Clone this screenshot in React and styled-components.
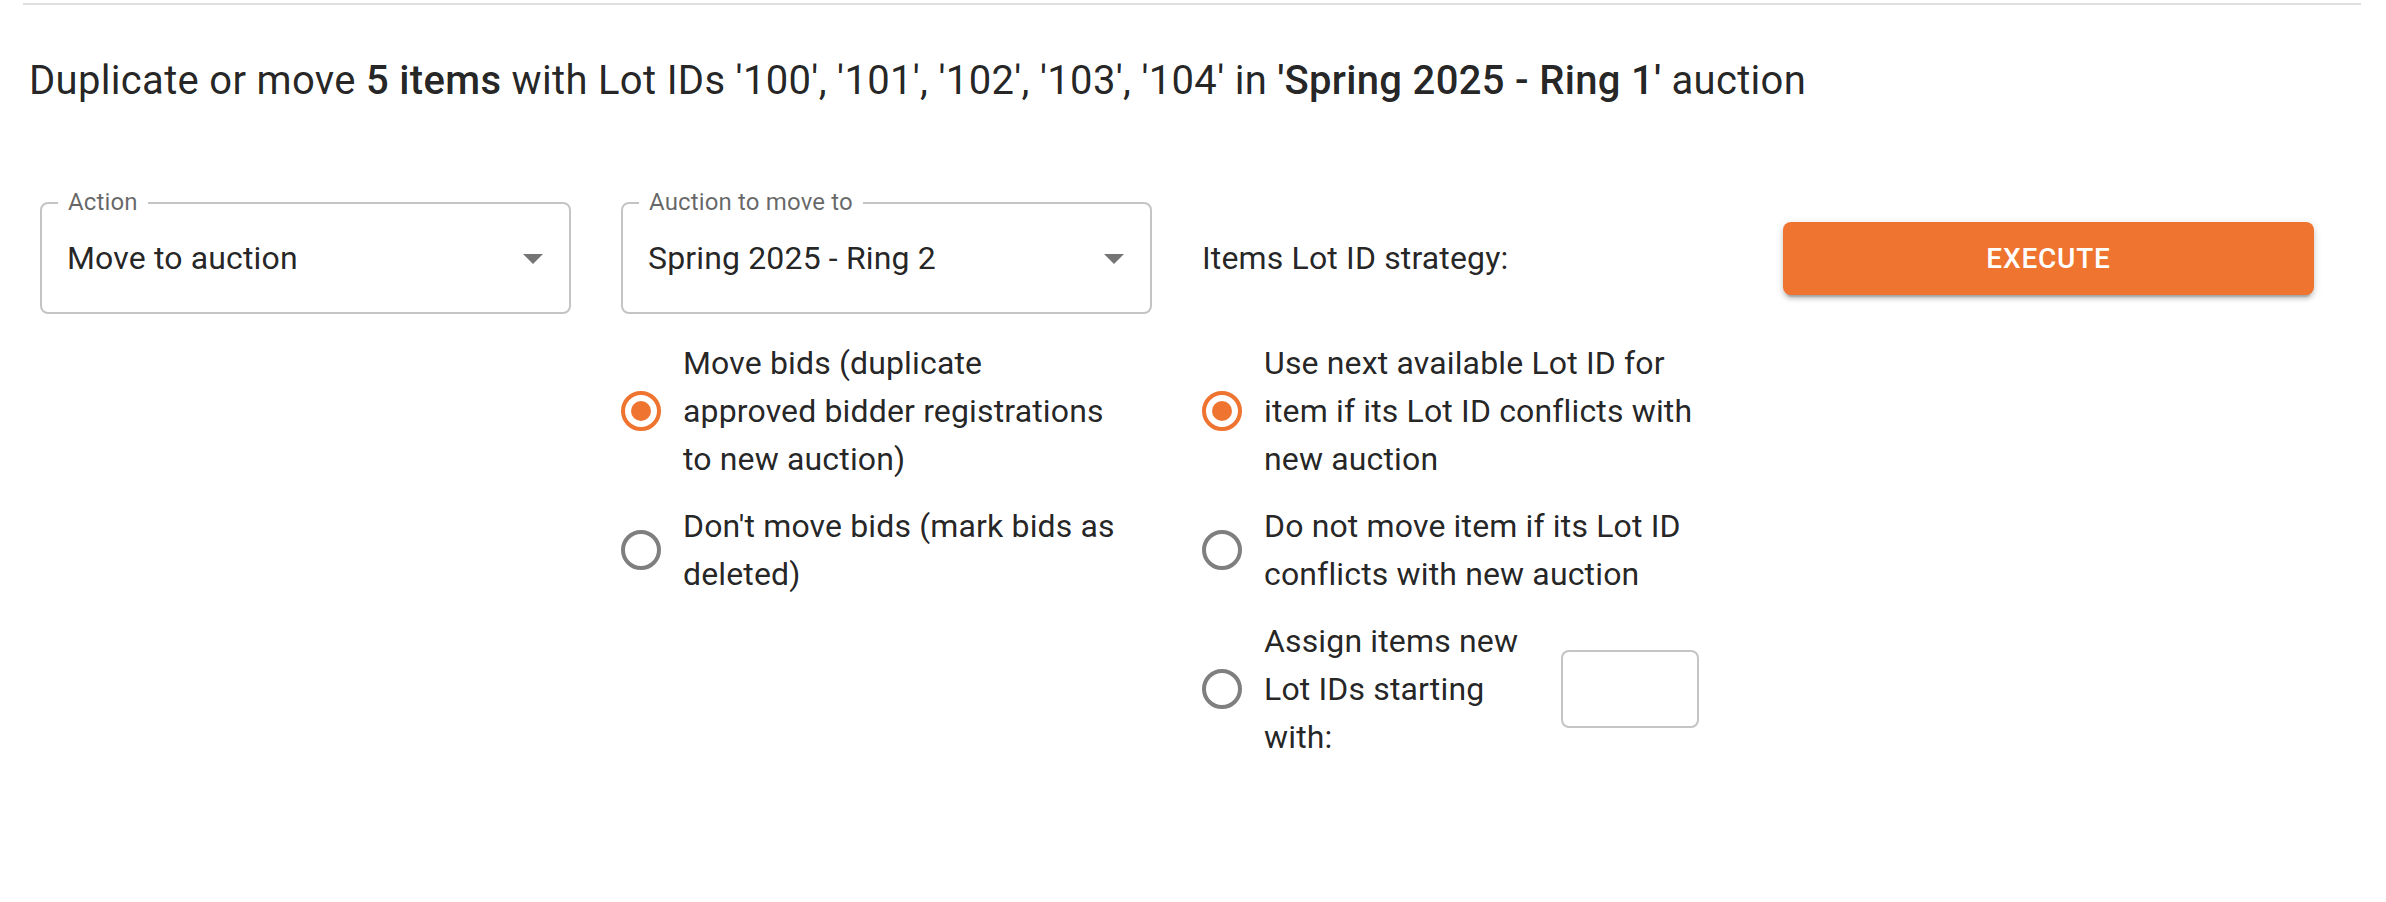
import React from 'react';
import styled, { createGlobalStyle } from 'styled-components';

const ORANGE = '#ef7430';

const GlobalStyle = createGlobalStyle`
  html, body {
    margin: 0;
    padding: 0;
    background: #fff;
  }
  body {
    font-family: Roboto, "Noto Sans", Arial, sans-serif;
    color: rgba(0, 0, 0, 0.87);
    letter-spacing: 0.00938em;
  }
`;

const Page = styled.div`
  padding: 3px 25px 0 23px;
`;

const Divider = styled.hr`
  margin: 0;
  border: none;
  height: 2px;
  background: #e0e0e0;
`;

const Body = styled.div`
  padding-left: 17px;
`;

const Heading = styled.h2`
  margin: 44px 0 0 -11px;
  font-size: 40px;
  line-height: 64px;
  font-weight: 400;
  letter-spacing: 0.32px;
  b {
    font-weight: 500;
  }
`;

const Form = styled.div`
  display: grid;
  grid-template-columns: repeat(4, 531px);
  column-gap: 50px;
  row-gap: 25px;
  margin-top: 89px;
`;

const SelectBox = styled.div`
  position: relative;
  box-sizing: border-box;
  height: 112px;
  border: 2px solid rgba(0, 0, 0, 0.23);
  border-radius: 8px;
  display: flex;
  align-items: center;
  padding: 0 12px 0 25px;
`;

const FloatLabel = styled.span`
  position: absolute;
  top: -16px;
  left: 16px;
  padding: 0 10px;
  background: #fff;
  font-size: 24px;
  line-height: 28px;
  color: rgba(0, 0, 0, 0.6);
`;

const SelectValue = styled.span`
  flex: 1;
  font-size: 32px;
  line-height: 46px;
`;

const Caret = styled.svg`
  width: 48px;
  height: 48px;
  fill: rgba(0, 0, 0, 0.54);
  flex-shrink: 0;
`;

const StrategyLabel = styled.div`
  display: flex;
  align-items: center;
  height: 112px;
  font-size: 32px;
  line-height: 48px;
`;

const ExecuteButton = styled.button`
  align-self: start;
  margin-top: 20px;
  height: 73px;
  border: none;
  border-radius: 8px;
  background: ${ORANGE};
  color: #fff;
  font-family: Roboto, Arial, sans-serif;
  font-size: 28px;
  font-weight: 500;
  letter-spacing: 0.8px;
  text-transform: uppercase;
  box-shadow: 0 6px 2px -4px rgba(0, 0, 0, 0.2), 0 4px 4px 0 rgba(0, 0, 0, 0.14),
    0 2px 10px 0 rgba(0, 0, 0, 0.12);
  cursor: pointer;
`;

const RadioGroup = styled.div`
  display: flex;
  flex-direction: column;
  gap: 19px;
`;

const Option = styled.label`
  display: flex;
  align-items: center;
  margin-left: -22px;
  cursor: pointer;
`;

const RadioBox = styled.span`
  display: flex;
  padding: 18px;
  flex-shrink: 0;
`;

const OptionText = styled.span`
  width: ${(p) => p.width || 440}px;
  font-size: 32px;
  line-height: 48px;
`;

const SmallInput = styled.input`
  box-sizing: border-box;
  width: 138px;
  height: 78px;
  margin-left: 17px;
  border: 2px solid rgba(0, 0, 0, 0.23);
  border-radius: 8px;
  font-size: 32px;
  padding: 0 16px;
  font-family: Roboto, Arial, sans-serif;
  outline: none;
`;

const Radio = ({ checked }) => (
  <RadioBox>
    <svg width="48" height="48" viewBox="0 0 24 24">
      <circle
        cx="12"
        cy="12"
        r="9"
        fill="none"
        strokeWidth="2"
        stroke={checked ? ORANGE : 'rgba(0,0,0,0.5)'}
      />
      {checked && <circle cx="12" cy="12" r="5" fill={ORANGE} />}
    </svg>
  </RadioBox>
);

const Select = ({ label, value }) => (
  <SelectBox>
    <FloatLabel>{label}</FloatLabel>
    <SelectValue>{value}</SelectValue>
    <Caret viewBox="0 0 24 24">
      <path d="M7 10l5 5 5-5z" />
    </Caret>
  </SelectBox>
);

export default function App() {
  return (
    <>
      <GlobalStyle />
      <Page>
        <Divider />
        <Body>
          <Heading>
            Duplicate or move <b>5 items</b> with Lot IDs '100', '101', '102', '103', '104' in{' '}
            <b>'Spring 2025 - Ring 1'</b> auction
          </Heading>
          <Form>
            <Select label="Action" value="Move to auction" />
            <Select label="Auction to move to" value="Spring 2025 - Ring 2" />
            <StrategyLabel>Items Lot ID strategy:</StrategyLabel>
            <ExecuteButton>Execute</ExecuteButton>

            <div />
            <RadioGroup>
              <Option>
                <Radio checked />
                <OptionText>Move bids (duplicate approved bidder registrations to new auction)</OptionText>
              </Option>
              <Option>
                <Radio />
                <OptionText>Don't move bids (mark bids as deleted)</OptionText>
              </Option>
            </RadioGroup>
            <RadioGroup>
              <Option>
                <Radio checked />
                <OptionText>Use next available Lot ID for item if its Lot ID conflicts with new auction</OptionText>
              </Option>
              <Option>
                <Radio />
                <OptionText>Do not move item if its Lot ID conflicts with new auction</OptionText>
              </Option>
              <Option>
                <Radio />
                <OptionText width={280}>Assign items new Lot IDs starting with:</OptionText>
                <SmallInput type="text" />
              </Option>
            </RadioGroup>
            <div />
          </Form>
        </Body>
      </Page>
    </>
  );
}
